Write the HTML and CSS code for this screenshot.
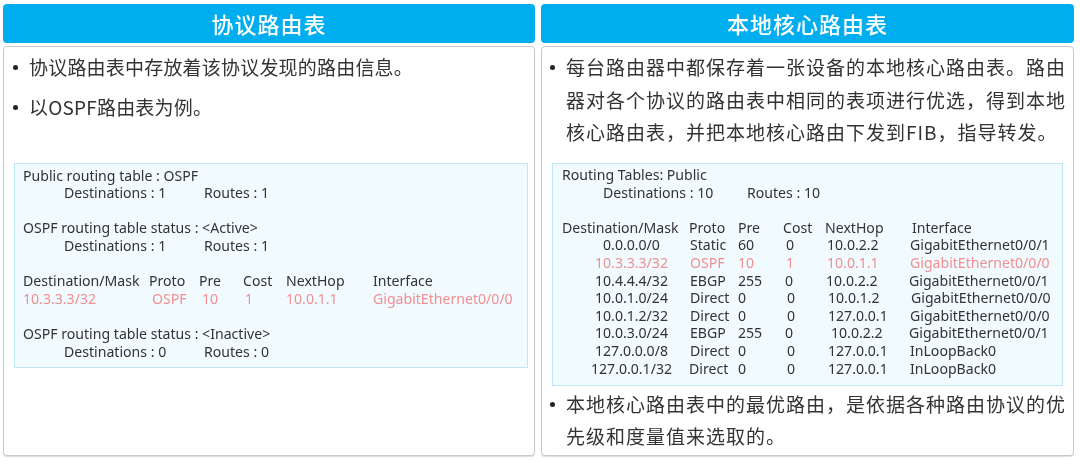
FILE: index.html
```html
<!DOCTYPE html>
<html lang="zh-CN">
<head>
<meta charset="utf-8">
<title>路由表</title>
<link rel="stylesheet" href="styles.css">
</head>
<body>
<main class="page">
  <section class="col">
    <h2 class="head">协议路由表</h2>
    <div class="panel panel-left">
      <ul class="notes notes-left">
        <li>协议路由表中存放着该协议发现的路由信息。</li>
        <li>以OSPF路由表为例。</li>
      </ul>
      <div class="code code-left">
        <div class="line">Public routing table : OSPF</div>
        <div class="line stat"><span>Destinations : 1</span><span>Routes : 1</span></div>
        <div class="line gap"></div>
        <div class="line">OSPF routing table status : &lt;Active&gt;</div>
        <div class="line stat"><span>Destinations : 1</span><span>Routes : 1</span></div>
        <div class="line gap"></div>
        <div class="row"><span>Destination/Mask</span><span>Proto</span><span>Pre</span><span>Cost</span><span>NextHop</span><span>Interface</span></div>
        <div class="row red"><span>10.3.3.3/32</span><span class="n3">OSPF</span><span class="n3">10</span><span class="n2">1</span><span>10.0.1.1</span><span>GigabitEthernet0/0/0</span></div>
        <div class="line gap"></div>
        <div class="line">OSPF routing table status : &lt;Inactive&gt;</div>
        <div class="line stat"><span>Destinations : 0</span><span>Routes : 0</span></div>
      </div>
    </div>
  </section>
  <section class="col">
    <h2 class="head">本地核心路由表</h2>
    <div class="panel panel-right">
      <ul class="notes notes-right">
        <li>每台路由器中都保存着一张设备的本地核心路由表。路由器对各个协议的路由表中相同的表项进行优选，得到本地核心路由表，并把本地核心路由下发到FIB，指导转发。</li>
      </ul>
      <div class="code code-right">
        <div class="line">Routing Tables: Public</div>
        <div class="line stat wide"><span>Destinations : 10</span><span>Routes : 10</span></div>
        <div class="line gap"></div>
        <div class="row"><span>Destination/Mask</span><span>Proto</span><span>Pre</span><span>Cost</span><span>NextHop</span><span>Interface</span></div>
        <div class="row data"><span>0.0.0.0/0</span><span class="n1">Static</span><span>60</span><span class="n3">0</span><span class="n2">10.0.2.2</span><span class="m2">GigabitEthernet0/0/1</span></div>
        <div class="row data red"><span>10.3.3.3/32</span><span class="n1">OSPF</span><span>10</span><span class="n3">1</span><span class="n2">10.0.1.1</span><span class="m2">GigabitEthernet0/0/0</span></div>
        <div class="row data"><span>10.4.4.4/32</span><span class="n1">EBGP</span><span>255</span><span class="n2">0</span><span class="n1">10.0.2.2</span><span class="m3">GigabitEthernet0/0/1</span></div>
        <div class="row data"><span>10.0.1.0/24</span><span class="n1">Direct</span><span>0</span><span class="n4">0</span><span class="n3">10.0.1.2</span><span class="m1">GigabitEthernet0/0/0</span></div>
        <div class="row data"><span>10.0.1.2/32</span><span class="n1">Direct</span><span>0</span><span class="n4">0</span><span class="n3">127.0.0.1</span><span class="m2">GigabitEthernet0/0/0</span></div>
        <div class="row data"><span>10.0.3.0/24</span><span class="n1">EBGP</span><span>255</span><span class="n2">0</span><span class="n6">10.0.2.2</span><span class="m3">GigabitEthernet0/0/1</span></div>
        <div class="row data"><span>127.0.0.0/8</span><span class="n1">Direct</span><span>0</span><span class="n4">0</span><span class="n3">127.0.0.1</span><span class="m2">InLoopBack0</span></div>
        <div class="row data"><span>127.0.0.1/32</span><span>Direct</span><span>0</span><span class="n4">0</span><span class="n3">127.0.0.1</span><span class="m2">InLoopBack0</span></div>
      </div>
      <ul class="notes notes-bottom">
        <li>本地核心路由表中的最优路由，是依据各种路由协议的优先级和度量值来选取的。</li>
      </ul>
    </div>
  </section>
</main>
</body>
</html>
```
FILE: styles.css
```css
* { box-sizing: border-box; }
html, body { margin: 0; height: 462px; overflow: hidden; background: #fff; }
body { font-family: "Noto Sans", "Noto Sans CJK SC", sans-serif; color: #333; }
.page {
  display: grid;
  grid-template-columns: 532px 533px;
  column-gap: 6px;
  padding: 4px 0 0 3px;
  filter: blur(0.45px);
}
.col { display: flex; flex-direction: column; gap: 3px; height: 452px; }
.head {
  margin: 0;
  height: 39px;
  background: #00aeef;
  border-radius: 4px;
  color: #fff;
  font: 500 22px/38px "Noto Sans CJK SC", sans-serif;
  letter-spacing: 1px;
  text-align: center;
}
.panel {
  flex: 1;
  min-height: 0;
  background: #fff;
  border: 1px solid #c9c9c9;
  border-radius: 4px;
  box-shadow: 0 1px 1px #ddd;
}
.notes {
  list-style: none;
  margin: 0;
  padding: 0;
  font: 19px/32.5px "Noto Sans CJK SC", sans-serif;
}
.notes li { position: relative; }
.notes li::before {
  content: "";
  position: absolute;
  left: -16px;
  top: 14px;
  width: 5px;
  height: 5px;
  border-radius: 50%;
  background: #222;
}
.notes-left { margin: 4px 0 0 25px; letter-spacing: 0.2px; }
.notes-left li + li { margin-top: 7px; }
.notes-right { margin: 4px 6px 0 24px; letter-spacing: 1px; }
.notes-bottom { margin: 2px 6px 0 24px; letter-spacing: 1px; }
.code {
  background: #f0faff;
  border: 1px solid #bfe6f5;
  font-size: 14.1px;
  line-height: 17.6px;
  padding-top: 2.6px;
}
.code-left { margin: 40px 6px 0 10px; height: 205px; padding-left: 8px; }
.code-right { margin: 14px 10px 0 10px; height: 223px; padding-left: 9px; }
.line, .row { height: 17.6px; white-space: nowrap; }
.stat { display: grid; grid-template-columns: 140px auto; justify-content: start; padding-left: 41px; }
.stat.wide { grid-template-columns: 144px auto; }
.row { display: grid; justify-content: start; }
.code-left .row { grid-template-columns: 126px 50px 44px 43px 87px auto; }
.code-right .row { grid-template-columns: 127px 49px 45px 42px 87px auto; }
.data span:first-child { text-align: center; padding-left: 12px; }
.red { color: #f09090; }
.n1 { padding-left: 1px; }
.n2 { padding-left: 2px; }
.n3 { padding-left: 3px; }
.n4 { padding-left: 4px; }
.n6 { padding-left: 6px; }
.m1 { margin-left: -1px; }
.m2 { margin-left: -2px; }
.m3 { margin-left: -3px; }
```
